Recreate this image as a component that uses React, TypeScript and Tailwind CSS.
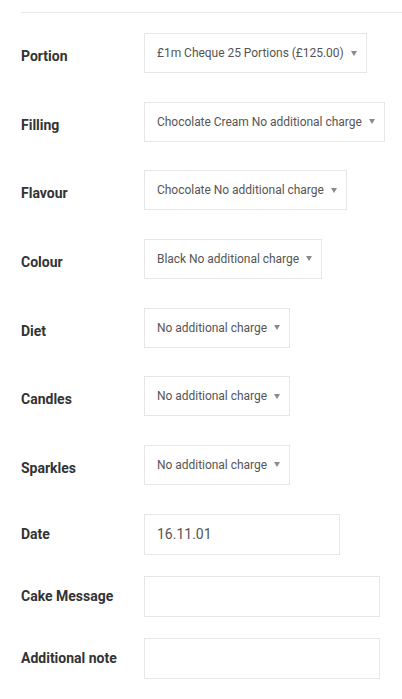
const SELECTS = [
  { label: 'Portion', value: '£1m Cheque 25 Portions (£125.00)' },
  { label: 'Filling', value: 'Chocolate Cream No additional charge' },
  { label: 'Flavour', value: 'Chocolate No additional charge' },
  { label: 'Colour', value: 'Black No additional charge' },
  { label: 'Diet', value: 'No additional charge' },
  { label: 'Candles', value: 'No additional charge' },
  { label: 'Sparkles', value: 'No additional charge' },
];

const INPUTS = [
  { label: 'Date', value: '16.11.01', width: 'w-[196px]', mt: 'mt-[29px]' },
  { label: 'Cake Message', value: '', width: 'w-[236px]', mt: 'mt-[21px]' },
  { label: 'Additional note', value: '', width: 'w-[236px]', mt: 'mt-[21px]' },
];

function Caret() {
  return (
    <svg width="6" height="5" viewBox="0 0 6 5" className="ml-[7px] shrink-0">
      <path d="M0 0h6L3 5z" fill="#8a8a8a" />
    </svg>
  );
}

export default function App() {
  return (
    <main
      className="min-h-screen bg-white pl-[21px] pt-[12px] text-[#333]"
      style={{ fontFamily: 'Roboto, "Liberation Sans", sans-serif' }}
    >
      <div className="border-t border-[#eaeaea]" />

      <div className="mt-[20px] flex flex-col gap-[28.67px]">
        {SELECTS.map((s) => (
          <div key={s.label} className="flex items-start">
            <label className="w-[123px] shrink-0 pt-[15px] text-[14px] font-bold leading-[16px]">
              {s.label}
            </label>
            <div className="flex h-[40px] items-center border border-[#e6e6e6] pl-[12px] pr-[9px] text-[12px] tracking-[-0.03px] text-[#555]">
              <span className="whitespace-nowrap">{s.value}</span>
              <Caret />
            </div>
          </div>
        ))}
      </div>

      {INPUTS.map((f) => (
        <div key={f.label} className={`flex items-center ${f.mt}`}>
          <label className="w-[123px] shrink-0 text-[14px] font-bold leading-[16px]">
            {f.label}
          </label>
          <div
            className={`flex h-[41px] items-center border border-[#e6e6e6] px-[12px] text-[14px] text-[#555] ${f.width}`}
          >
            {f.value}
          </div>
        </div>
      ))}
    </main>
  );
}
